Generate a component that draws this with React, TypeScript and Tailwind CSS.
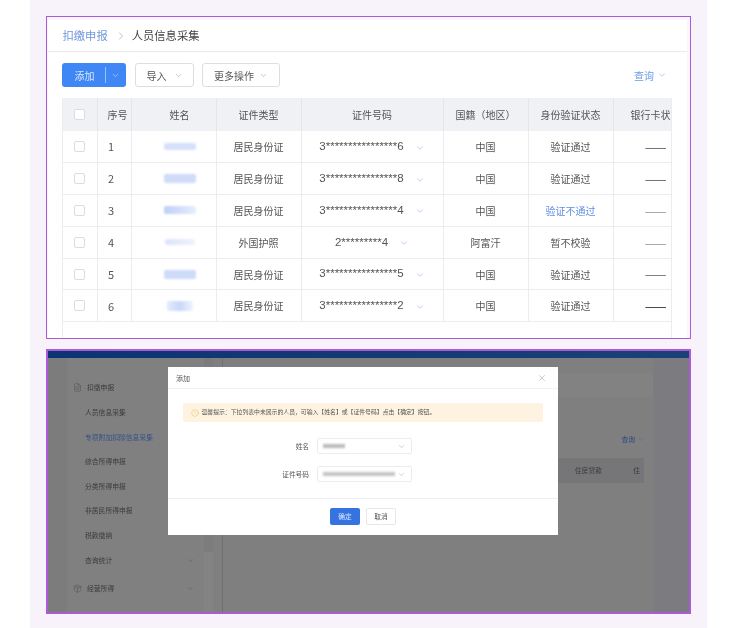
import { ChevronDown, ChevronRight, CircleAlert, FileText, Package, X } from 'lucide-react'

const cjk = { fontFamily: '"Noto Sans CJK SC", "Liberation Sans", sans-serif' }

const rows = [
  { no: 1, blur: 'w-[32px] h-[7px] bg-[#d5e0fa]', type: '居民身份证', id: '3****************6', nation: '中国', status: '验证通过', dash: 'text-[#555]' },
  { no: 2, blur: 'w-[32px] h-[9px] bg-[#cfdbf8]', type: '居民身份证', id: '3****************8', nation: '中国', status: '验证通过', dash: 'text-[#555]' },
  { no: 3, blur: 'w-[32px] h-[8px] bg-gradient-to-r from-[#bcd0f8] to-[#e6edfd]', type: '居民身份证', id: '3****************4', nation: '中国', status: '验证不通过', dash: 'text-[#999]' },
  { no: 4, blur: 'w-[30px] h-[6px] bg-gradient-to-r from-[#dbe4fb] to-[#eef2fd]', type: '外国护照', id: '2*********4', nation: '阿富汗', status: '暂不校验', dash: 'text-[#999]' },
  { no: 5, blur: 'w-[32px] h-[9px] bg-[#cddbf9]', type: '居民身份证', id: '3****************5', nation: '中国', status: '验证通过', dash: 'text-[#666]' },
  { no: 6, blur: 'w-[26px] h-[10px] bg-gradient-to-r from-[#e4ebfc] via-[#c9d7f8] to-[#f0f4fe]', type: '居民身份证', id: '3****************2', nation: '中国', status: '验证通过', dash: 'text-[#222]' },
]

const headers = ['证件类型', '证件号码', '国籍（地区）', '身份验证状态', '银行卡状态']

function Box() {
  return <div className="mx-auto w-[11px] h-[11px] rounded-[2px] border border-[#dcdcdf] bg-white" />
}

function TopCard() {
  return (
    <div className="h-[323px] border border-[#ab5bd6] bg-[#f9f6fb] pt-[3px] pr-[3px] pl-px overflow-hidden">
      <div className="h-full bg-white">
        <div className="h-[32px] flex items-center pl-[14.5px] border-b border-[#eaeaec] text-[11.3px]">
          <span className="text-[#6f98dc]">扣缴申报</span>
          <ChevronRight size={12} strokeWidth={1.5} className="text-[#a9a9ad] ml-[7px] mr-[5px]" />
          <span className="text-[#444]">人员信息采集</span>
        </div>
        <div className="mt-[11px] h-[24px] pl-[14px] pr-[20px] flex items-center text-[10px] text-[#555]">
          <div className="w-[64px] h-full rounded-[3px] bg-[#3f87f5] text-[#dbe8fd] flex items-center">
            <span className="w-[43px] pl-[2px] text-center">添加</span>
            <span className="w-px h-[16px] bg-[#9cc0f8]" />
            <ChevronDown size={9} strokeWidth={1.5} className="ml-[5px]" />
          </div>
          <div className="ml-[9px] w-[59px] h-full rounded-[3px] border border-[#dedee0] flex items-center justify-center gap-[7px]">
            导入
            <ChevronDown size={9} strokeWidth={1.2} className="text-[#888]" />
          </div>
          <div className="ml-[8px] w-[78px] h-full rounded-[3px] border border-[#dedee0] flex items-center justify-center gap-[5px]">
            更多操作
            <ChevronDown size={9} strokeWidth={1.2} className="text-[#888]" />
          </div>
          <div className="ml-auto flex items-center gap-[3px] text-[#6a9be0]">
            查询
            <ChevronDown size={10} strokeWidth={1.2} />
          </div>
        </div>
        <div className="mt-[11px] ml-[14px] w-[610px] overflow-hidden border-l border-r border-[#ececee] h-[240px]">
          <table className="table-fixed w-[635px] border-collapse text-[10px] text-[#555] text-center">
            <colgroup>
              <col className="w-[34px]" />
              <col className="w-[34px]" />
              <col className="w-[85px]" />
              <col className="w-[85px]" />
              <col className="w-[142px]" />
              <col className="w-[85px]" />
              <col className="w-[85px]" />
              <col className="w-[85px]" />
            </colgroup>
            <thead>
              <tr className="h-[33px] bg-[#f0f1f4]">
                <th className="font-normal border-r border-[#e6e6e9]"><Box /></th>
                <th className="font-normal whitespace-nowrap border-r border-[#e6e6e9] pl-[7px]">序号</th>
                <th className="font-normal whitespace-nowrap border-r border-[#e6e6e9] pl-[12px]">姓名</th>
                {headers.map(h => (
                  <th key={h} className="font-normal whitespace-nowrap border-r border-[#e6e6e9]">{h}</th>
                ))}
              </tr>
            </thead>
            <tbody>
              {rows.map(r => (
                <tr key={r.no} className="h-[31.8px] border-b border-[#ececee]">
                  <td className="border-r border-[#ececee]"><Box /></td>
                  <td className="border-r border-[#ececee] text-[11px] pr-[6px]">{r.no}</td>
                  <td className="border-r border-[#ececee] pl-[13px]">
                    <div className={`mx-auto rounded-[2px] blur-[1px] ${r.blur}`} />
                  </td>
                  <td className="border-r border-[#ececee]">{r.type}</td>
                  <td className="border-r border-[#ececee]">
                    <div className="flex items-center justify-center gap-[11px]">
                      <span className="text-[11.5px]" style={{ fontFamily: '"Liberation Sans", sans-serif' }}>{r.id}</span>
                      <ChevronDown size={10} strokeWidth={1.8} className="text-[#a8c0f2] mt-[2px]" />
                    </div>
                  </td>
                  <td className="border-r border-[#ececee]">{r.nation}</td>
                  <td className={`border-r border-[#ececee] ${r.status === '验证不通过' ? 'text-[#5f90e6]' : ''}`}>{r.status}</td>
                  <td className={`text-[13px] ${r.dash}`}>——</td>
                </tr>
              ))}
            </tbody>
          </table>
        </div>
      </div>
    </div>
  )
}

const sideItems = ['人员信息采集', '专项附加扣除信息采集', '综合所得申报', '分类所得申报', '非居民所得申报', '税款缴纳']

function Backdrop() {
  return (
    <div className="h-full flex flex-col bg-[#7f7f7f] text-[6.8px] text-[#3a3a3a]">
      <div className="h-[7px] bg-gradient-to-r from-[#0c3373] to-[#1c4177] shrink-0" />
      <div className="flex-1 flex min-h-0">
        <div className="w-[19px] bg-[#7c7c7c]" />
        <div className="w-[137px] bg-[#808080] pt-[22px]">
          <div className="flex items-center h-[14px] pl-[6px] gap-[5px]">
            <FileText size={9} strokeWidth={1} className="text-[#444]" />
            扣缴申报
          </div>
          <div className="mt-[13px] pl-[18px] flex flex-col gap-[14.5px]">
            {sideItems.map(s => (
              <div key={s} className={`h-[10px] leading-[10px] whitespace-nowrap ${s.startsWith('专项') ? 'text-[#33518a]' : ''}`}>{s}</div>
            ))}
            <div className="h-[10px] leading-[10px] mt-[1px] flex items-center justify-between pr-[10px]">
              查询统计
              <ChevronDown size={7} strokeWidth={1} />
            </div>
          </div>
          <div className="mt-[16px] flex items-center h-[14px] pl-[6px] gap-[5px] pr-[10px]">
            <Package size={9} strokeWidth={1} className="text-[#444]" />
            经营所得
            <ChevronDown size={7} strokeWidth={1} className="ml-auto" />
          </div>
        </div>
        <div className="w-[9px] bg-[#7c7c7c] flex flex-col justify-end">
          <div className="h-[60px] bg-[#838383]" />
        </div>
        <div className="w-[10px] bg-[#7f7f7f] border-r border-[#6f6f6f]" />
        <div className="flex-1 flex">
          <div className="w-[430px] pt-[15px]">
            <div className="h-[24px] bg-[#828282]" />
            <div className="mt-[34px] h-[16px] flex items-center justify-end pr-[9px] gap-[2px] text-[#2d4a80]">
              查询
              <ChevronDown size={7} strokeWidth={1} />
            </div>
            <div className="mt-[11px] ml-px mr-[9px] h-[25px] bg-[#767678] relative overflow-hidden flex items-center justify-end pr-[42px]">
              <span>住房贷款</span>
              <span className="absolute right-[4px] top-[7px]">住</span>
            </div>
          </div>
          <div className="flex-1 bg-[#7c7b80]" />
        </div>
      </div>
    </div>
  )
}

function Modal() {
  return (
    <div className="absolute left-[120px] top-[16px] w-[390px] h-[168px] bg-white flex flex-col text-[#555]">
      <div className="h-[22px] px-[8px] pt-[1px] flex items-center justify-between border-b border-[#f2f2f4] text-[7px]">
        添加
        <X size={10} strokeWidth={1} className="text-[#888] mr-[3px]" />
      </div>
      <div className="flex-1">
        <div className="mt-[14px] mx-[15px] h-[19px] rounded-[2px] bg-[#fdf3e0] flex items-center pl-[8px] gap-[2.5px] text-[5.85px] whitespace-nowrap">
          <CircleAlert size={8} strokeWidth={1.2} className="text-[#f0b040]" />
          温馨提示：下拉列表中未展示的人员，可输入【姓名】或【证件号码】点击【确定】按钮。
        </div>
        <div className="mt-[16px] flex items-center justify-end h-[16px] pr-[146px] gap-[8px] text-[6.7px]">
          姓名
          <div className="w-[95px] h-full rounded-[2px] border border-[#ececee] flex items-center justify-between pl-[5px] pr-[5px]">
            <div className="w-[22px] h-[4px] bg-[#bbbbbb] blur-[1px]" />
            <ChevronDown size={9} strokeWidth={1} className="text-[#888]" />
          </div>
        </div>
        <div className="mt-[12px] flex items-center justify-end h-[16px] pr-[146px] gap-[8px] text-[6.7px]">
          证件号码
          <div className="w-[95px] h-full rounded-[2px] border border-[#ececee] flex items-center justify-between pl-[5px] pr-[5px]">
            <div className="w-[72px] h-[4px] bg-[#c4c4c4] blur-[1px]" />
            <ChevronDown size={9} strokeWidth={1} className="text-[#888]" />
          </div>
        </div>
      </div>
      <div className="h-[37px] border-t border-[#efeff1] flex items-center justify-center gap-[6px] text-[6.7px] pb-[2px]">
        <div className="w-[30px] h-[17px] rounded-[2px] bg-[#3573e0] text-[#dfe9fb] flex items-center justify-center">确定</div>
        <div className="w-[30px] h-[17px] rounded-[2px] border border-[#e8e8ea] flex items-center justify-center">取消</div>
      </div>
    </div>
  )
}

export default function App() {
  return (
    <div className="min-h-[628px] bg-white blur-[0.3px]" style={cjk}>
      <div className="ml-[30px] w-[677px] h-[628px] bg-[#f8f3fb] pt-[16px] px-[16px]">
        <TopCard />
        <div className="mt-[10px] h-[265px] border-2 border-[#ab5bd6] relative overflow-hidden">
          <Backdrop />
          <Modal />
        </div>
      </div>
    </div>
  )
}
